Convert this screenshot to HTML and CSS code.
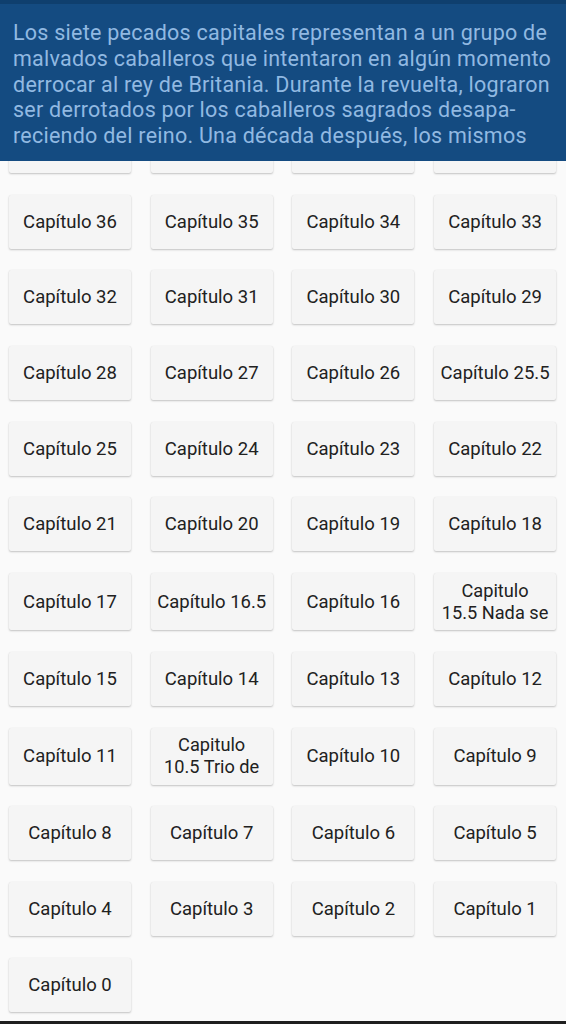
FILE: index.html
```html
<!DOCTYPE html>
<html lang="es">
<head>
<meta charset="utf-8">
<title>Capítulos</title>
<link rel="stylesheet" href="styles.css">
</head>
<body>
<header class="synopsis">
  <p class="synopsis-text">Los siete pecados capitales representan a un grupo de<br>malvados caballeros que intentaron en algún momento<br>derrocar al rey de Britania. Durante la revuelta, lograron<br>ser derrotados por los caballeros sagrados desapa-<br>reciendo del reino. Una década después, los mismos</p>
</header>
<main class="chapters">
  <a class="chapter hidden-row" aria-hidden="true"></a>
  <a class="chapter hidden-row" aria-hidden="true"></a>
  <a class="chapter hidden-row" aria-hidden="true"></a>
  <a class="chapter hidden-row" aria-hidden="true"></a>
  <a class="chapter">Capítulo 36</a>
  <a class="chapter">Capítulo 35</a>
  <a class="chapter">Capítulo 34</a>
  <a class="chapter">Capítulo 33</a>
  <a class="chapter">Capítulo 32</a>
  <a class="chapter">Capítulo 31</a>
  <a class="chapter">Capítulo 30</a>
  <a class="chapter">Capítulo 29</a>
  <a class="chapter">Capítulo 28</a>
  <a class="chapter">Capítulo 27</a>
  <a class="chapter">Capítulo 26</a>
  <a class="chapter">Capítulo 25.5</a>
  <a class="chapter">Capítulo 25</a>
  <a class="chapter">Capítulo 24</a>
  <a class="chapter">Capítulo 23</a>
  <a class="chapter">Capítulo 22</a>
  <a class="chapter">Capítulo 21</a>
  <a class="chapter">Capítulo 20</a>
  <a class="chapter">Capítulo 19</a>
  <a class="chapter">Capítulo 18</a>
  <a class="chapter">Capítulo 17</a>
  <a class="chapter">Capítulo 16.5</a>
  <a class="chapter">Capítulo 16</a>
  <a class="chapter two-line">Capitulo<br>15.5 Nada se</a>
  <a class="chapter">Capítulo 15</a>
  <a class="chapter">Capítulo 14</a>
  <a class="chapter">Capítulo 13</a>
  <a class="chapter">Capítulo 12</a>
  <a class="chapter">Capítulo 11</a>
  <a class="chapter two-line">Capitulo<br>10.5 Trio de</a>
  <a class="chapter">Capítulo 10</a>
  <a class="chapter">Capítulo 9</a>
  <a class="chapter">Capítulo 8</a>
  <a class="chapter">Capítulo 7</a>
  <a class="chapter">Capítulo 6</a>
  <a class="chapter">Capítulo 5</a>
  <a class="chapter">Capítulo 4</a>
  <a class="chapter">Capítulo 3</a>
  <a class="chapter">Capítulo 2</a>
  <a class="chapter">Capítulo 1</a>
  <a class="chapter">Capítulo 0</a>
</main>
<div class="nav-edge"></div>
</body>
</html>
```

FILE: styles.css
```css
html, body {
  margin: 0;
  padding: 0;
  background: #fafafa;
  font-family: Roboto, "Noto Sans", "Liberation Sans", sans-serif;
}

.synopsis {
  position: fixed;
  top: 0;
  left: 0;
  right: 0;
  height: 157px;
  box-sizing: content-box;
  background: #144b81;
  border-top: 4px solid #0f3f6e;
  overflow: hidden;
  z-index: 2;
}

.synopsis-text {
  margin: 16px 2px 0 13px;
  color: #91b9e2;
  font-size: 21.5px;
  letter-spacing: 0.25px;
  line-height: 25.8px;
  white-space: nowrap;
}

.chapters {
  display: grid;
  grid-template-columns: repeat(4, 122px);
  column-gap: 19.7px;
  row-gap: 21.7px;
  padding: 119px 10px 12px 9px;
  align-items: stretch;
}

.chapter {
  display: flex;
  align-items: center;
  justify-content: center;
  text-align: center;
  min-height: 54px;
  box-sizing: border-box;
  padding: 6px 2px;
  background: #f5f5f5;
  border-radius: 2px;
  box-shadow: 0 1px 2px rgba(0, 0, 0, 0.22), 0 0 1px rgba(0, 0, 0, 0.08);
  color: #212121;
  font-size: 18.5px;
  line-height: 22px;
  white-space: nowrap;
}

.chapter.two-line {
  padding: 6.5px 2px;
  line-height: 22px;
  font-size: 18.2px;
}

.nav-edge {
  position: fixed;
  left: 0;
  right: 0;
  bottom: 0;
  height: 3px;
  background: #1f1f1f;
  z-index: 3;
}
```
